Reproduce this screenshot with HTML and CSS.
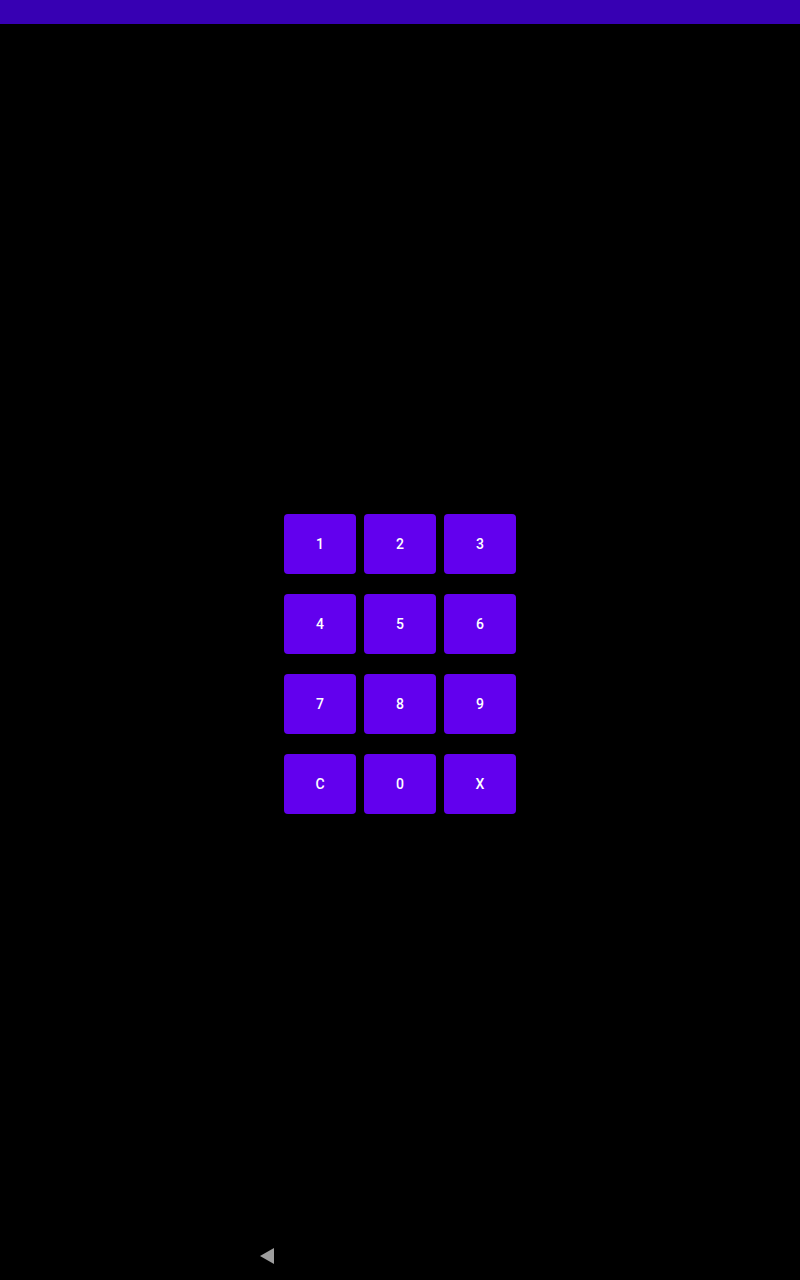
FILE: index.html
```html
<!DOCTYPE html>
<html>
<head>
<meta charset="utf-8">
<link rel="stylesheet" href="styles.css">
</head>
<body>
<div class="screen">
  <div class="status-bar"></div>
  <main class="main">
    <div class="keypad">
      <button class="key">1</button>
      <button class="key">2</button>
      <button class="key">3</button>
      <button class="key">4</button>
      <button class="key">5</button>
      <button class="key">6</button>
      <button class="key">7</button>
      <button class="key">8</button>
      <button class="key">9</button>
      <button class="key">C</button>
      <button class="key">0</button>
      <button class="key">X</button>
    </div>
  </main>
  <div class="nav-bar">
    <svg class="back" width="14" height="16" viewBox="0 0 14 16"><polygon points="14,0 14,16 0,8" fill="#9e9e9e"/></svg>
  </div>
</div>
</body>
</html>
```
FILE: styles.css
```css
html, body {
  margin: 0;
  padding: 0;
  background: #000;
}
.screen {
  width: 800px;
  height: 1280px;
  display: flex;
  flex-direction: column;
  font-family: Roboto, "Noto Sans", sans-serif;
}
.status-bar {
  height: 24px;
  background: #3700b3;
  flex: none;
}
.main {
  flex: 1;
  display: flex;
  justify-content: center;
  align-items: flex-start;
  padding-top: 490px;
}
.keypad {
  display: grid;
  grid-template-columns: repeat(3, 72px);
  grid-auto-rows: 60px;
  column-gap: 8px;
  row-gap: 20px;
}
.key {
  margin: 0;
  padding: 0;
  border: none;
  border-radius: 4px;
  background: #6200ee;
  color: #fff;
  font-family: Roboto, "Noto Sans", sans-serif;
  font-weight: 500;
  font-size: 14px;
  display: flex;
  align-items: center;
  justify-content: center;
}
.nav-bar {
  height: 48px;
  flex: none;
  display: flex;
  align-items: center;
  padding-left: 260px;
}
.back {
  display: block;
}
```
